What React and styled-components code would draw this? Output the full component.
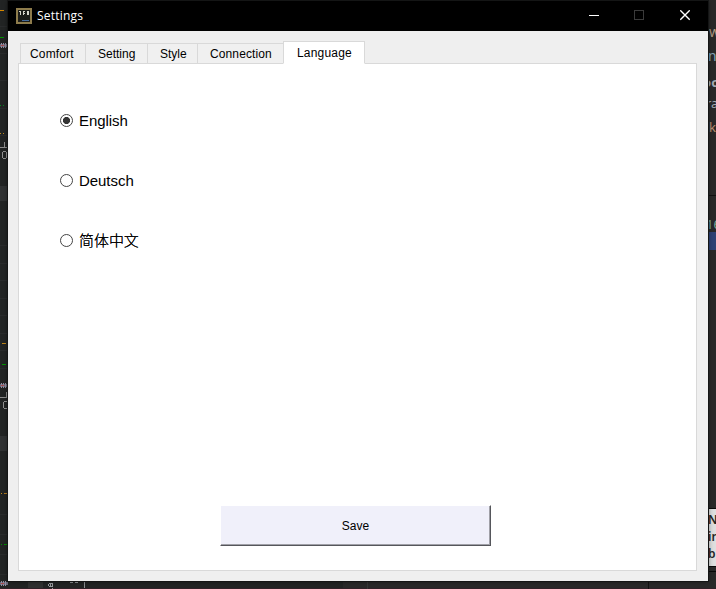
import React, { useState } from "react";
import styled, { createGlobalStyle } from "styled-components";

const Global = createGlobalStyle`
  * { box-sizing: border-box; }
  body { margin: 0; overflow: hidden; background: #222424; }
`;

const Desktop = styled.div`
  position: relative;
  width: 716px;
  height: 589px;
  padding: 1px 8px 8px;
  overflow: hidden;
  background: #222424;
  font-family: "Liberation Sans", Arial, sans-serif;
`;

const Backdrop = styled.svg`
  position: absolute;
  inset: 0;
`;

const CodeScrap = styled.span`
  position: absolute;
  left: ${(p) => p.$x}px;
  top: ${(p) => p.$y}px;
  color: ${(p) => p.$color || "#a3acb5"};
  font: ${(p) => p.$weight || 400} ${(p) => p.$size || 14}px/16px "Noto Sans", sans-serif;
  white-space: nowrap;
`;

const Window = styled.div`
  position: relative;
  display: flex;
  flex-direction: column;
  width: 700px;
  height: 580px;
  background: #efefef;
  box-shadow: 0 0 0 1px #141515, 0 0 5px rgba(0, 0, 0, 0.55);
`;

const TitleBar = styled.header`
  display: flex;
  align-items: center;
  height: 30px;
  padding-left: 8px;
  background: #000;
  color: #fff;
`;

const Title = styled.span`
  flex: 1;
  margin-left: 5px;
  font: 12px/18px "Open Sans", "Noto Sans", sans-serif;
  letter-spacing: 0.2px;
`;

const WindowButton = styled.button`
  display: grid;
  place-items: center;
  width: ${(p) => p.$width || 45}px;
  height: 30px;
  padding: 0;
  border: 0;
  background: none;
`;

const Body = styled.main`
  display: flex;
  flex: 1;
  flex-direction: column;
  padding: 10px 11px 10px 10px;
`;

const TabList = styled.nav`
  display: flex;
  align-items: flex-end;
  height: 23px;
  margin-bottom: -1px;
  padding-left: 2px;
`;

const Tab = styled.button`
  z-index: ${(p) => (p.$active ? 1 : 0)};
  width: ${(p) => p.$width}px;
  height: ${(p) => (p.$active ? 23 : 21)}px;
  margin: 0 -1px 0 0;
  padding: ${(p) => (p.$active ? "2px 0 0" : "1px 0 0")} ${(p) => p.$inset}px;
  border: 1px solid #d9d9d9;
  border-bottom-color: ${(p) => (p.$active ? "#fff" : "#d9d9d9")};
  background: ${(p) => (p.$active ? "#fff" : "#f0f0f0")};
  color: #000;
  font: 12px/19px "Liberation Sans", Arial, sans-serif;
  letter-spacing: ${(p) => p.$spacing || 0}px;
  text-align: left;
  white-space: nowrap;
`;

const Panel = styled.section`
  display: flex;
  flex: 1;
  flex-direction: column;
  align-items: flex-start;
  padding: 41px 0 24px 41px;
  border: 1px solid #d9d9d9;
  background: #fff;
`;

const Choices = styled.div`
  display: flex;
  flex: 1;
  flex-direction: column;
  gap: 28px;
`;

const Choice = styled.label`
  display: flex;
  align-items: center;
  height: 32px;
  gap: 6px;
  color: #000;
  font: ${(p) => (p.$light ? 300 : 400)} 15px/20px "Liberation Sans", Arial, "Noto Sans CJK SC", sans-serif;
  letter-spacing: -0.05px;
  text-shadow: ${(p) => (p.$light ? "0 0 0 #000" : "none")};
`;

const Radio = styled.input`
  appearance: none;
  width: 13px;
  height: 13px;
  margin: 0 0 2px;
  border: 1px solid #444;
  border-radius: 50%;
  background: ${(p) => (p.checked ? "radial-gradient(circle, #333 3.2px, #fff 3.9px)" : "#fff")};
`;

const SaveButton = styled.button`
  width: 271px;
  height: 41px;
  margin-left: 160px;
  padding: 1px 0 0;
  border: 1px solid;
  border-color: #fff #55565b #55565b #fff;
  background: #f0f0fa;
  box-shadow: inset -1px -1px #a0a0a7;
  color: #000;
  font: 12px/16px "Liberation Sans", Arial, sans-serif;
`;

const bands = [186, 436];
const rules = [26, 53, 80, 108, 135, 245, 263, 280, 298, 315, 333, 350, 368, 514, 534, 554, 574];
const marks = [
  [0, 10, 4, "#d88900"], [0, 37, 4, "#009000"],
  [0, 105, 1, "#008a20"], [3, 105, 1, "#008a20"],
  [0, 133, 1, "#bd8b20"], [3, 133, 1, "#bd8b20"],
  [2, 343, 4, "#bd8518"], [2, 364, 4, "#009500"],
  [1, 493, 1, "#c48a18"], [4, 493, 3, "#b27b20"],
  [1, 544, 1, "#009000"], [4, 544, 3, "#009000"],
];
const cables = [[0, 45], [0, 385], [0, 583]];

function DesktopBehind() {
  return (
    <>
      <Backdrop width="716" height="589" shapeRendering="crispEdges">
        <path d="M708 0H716V589H343V580H708Z" fill="#292929" />
        {bands.map((y) => <rect key={y} y={y} width="8" height="15" fill="#303233" />)}
        {rules.map((y) => <rect key={y} y={y} width="8" height="1" fill="#292b2c" />)}
        {marks.map(([x, y, w, c], i) => <rect key={i} x={x} y={y} width={w} height="1" fill={c} />)}
        {cables.map(([x, y]) => (
          <g key={y} transform={`translate(${x} ${y})`}>
            <rect y="-1" width="8" height="3" fill="#6b697c" />
            <path d="M1.5-2V3M3.5-2V3M5.5-2V3" stroke="#9290a2" fill="none" />
            <path d="M1 .5H4" stroke="#ad4b4c" />
          </g>
        ))}
        <path d="M0 147.5H7M4.5 142V147M0 397.5H6.5V392" stroke="#8e8e8e" fill="none" />
        <path d="M3 151.5H6M3 158.5H6M2.5 152V158M6.5 152V158M4 401.5H7M4 408.5H7M3.5 402V408" stroke="#929292" fill="none" />
        <rect x="28" y="581" width="15" height="8" fill="#303131" />
        <path d="M70 582.5H73M75 582.5H78M84.5 582V588" stroke="#8d9092" />
        <path d="M0 588.5H716" stroke="#302128" />
        <path d="M367.5 582V589" stroke="#353636" />
        <path d="M648.5 581V589M708 195.5H716" stroke="#111" />
        <rect x="709" y="232" width="7" height="18" fill="#2e4275" />
        <rect x="709" y="509" width="7" height="57" fill="#dedfdf" />
        <path d="M709 508.5H716M709 566.5H716M709 571H716" stroke="#080808" />
        <path d="M49 583.5H52M48.5 584V586M50.5 584V586M52.5 583V587M49 586.5H53M52.5 588V589" stroke="#999ca0" fill="none" />
      </Backdrop>
      <CodeScrap $x={709} $y={24} $color="#ae9a85">w</CodeScrap>
      <CodeScrap $x={708} $y={48} $color="#86a6b8">n</CodeScrap>
      <CodeScrap $x={703} $y={74} $weight={700} $size={13}>oc</CodeScrap>
      <CodeScrap $x={706} $y={95} $size={13}>ra</CodeScrap>
      <CodeScrap $x={709} $y={119} $size={13} $color="#ba9275">k</CodeScrap>
      <CodeScrap $x={706} $y={216} $size={13} $color="#79a998">16</CodeScrap>
      <CodeScrap $x={708} $y={512} $size={12} $weight={600} $color="#252525">N</CodeScrap>
      <CodeScrap $x={708} $y={529} $size={12} $weight={600} $color="#252525">in</CodeScrap>
      <CodeScrap $x={708} $y={546} $size={12} $weight={600} $color="#252525">b</CodeScrap>
    </>
  );
}

function AppIcon() {
  return (
    <svg width="16" height="16" shapeRendering="crispEdges" aria-hidden="true">
      <rect width="16" height="16" fill="#8e7c4c" />
      <rect x="2" y="2" width="12" height="12" fill="#1b1c19" />
      <path d="M3 3.5H5M4.5 4V7M7 3.5H9M7.5 4V7M8 5.5H9M11 3.5H13M11.5 4V7M12.5 4V7" stroke="#d5d4cb" />
      <path d="M6 12.5H13" stroke="#456b9b" />
    </svg>
  );
}

const tabs = [
  { name: "Comfort", width: 66, inset: 9, spacing: 0.15 },
  { name: "Setting", width: 63, inset: 12 },
  { name: "Style", width: 51, inset: 12 },
  { name: "Connection", width: 87, inset: 12, spacing: 0.12 },
  { name: "Language", width: 82, inset: 13, spacing: 0.2 },
];
const languages = ["English", "Deutsch", "简体中文"];

export default function App() {
  const [language, setLanguage] = useState("English");
  return (
    <>
      <Global />
      <Desktop>
        <DesktopBehind />
        <Window>
          <TitleBar>
            <AppIcon />
            <Title>Settings</Title>
            <WindowButton aria-label="Minimize">
              <svg width="11" height="11" shapeRendering="crispEdges"><path d="M0 4.5H10" stroke="#fff" /></svg>
            </WindowButton>
            <WindowButton aria-label="Maximize" disabled>
              <svg width="12" height="12"><rect x=".5" y=".5" width="9" height="9" fill="none" stroke="#3b3b3b" /></svg>
            </WindowButton>
            <WindowButton $width={46} aria-label="Close">
              <svg width="10" height="12"><path d="M.3 .3L9.7 9.7M9.7 .3L.3 9.7" stroke="#fff" strokeWidth="1.3" /></svg>
            </WindowButton>
          </TitleBar>
          <Body>
            <TabList>
              {tabs.map((tab) => (
                <Tab
                  key={tab.name}
                  $width={tab.width}
                  $inset={tab.inset}
                  $spacing={tab.spacing}
                  $active={tab.name === "Language"}
                >
                  {tab.name}
                </Tab>
              ))}
            </TabList>
            <Panel>
              <Choices>
                {languages.map((name) => (
                  <Choice key={name} $light={name === "简体中文"}>
                    <Radio type="radio" name="language" checked={language === name} onChange={() => setLanguage(name)} />
                    {name}
                  </Choice>
                ))}
              </Choices>
              <SaveButton>Save</SaveButton>
            </Panel>
          </Body>
        </Window>
      </Desktop>
    </>
  );
}
